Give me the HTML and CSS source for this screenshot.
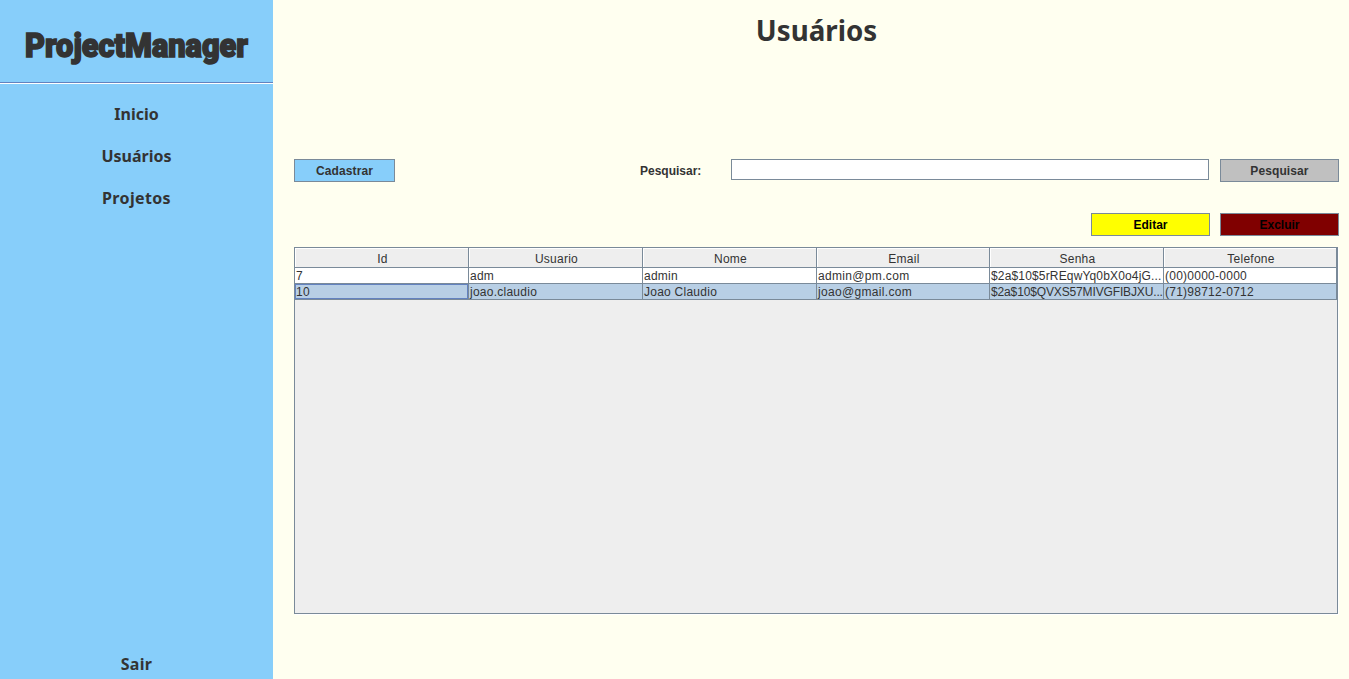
FILE: index.html
```html
<!DOCTYPE html>
<html lang="pt-BR">
<head>
<meta charset="utf-8">
<title>ProjectManager</title>
<link rel="stylesheet" href="styles.css">
</head>
<body>
<div class="app">
  <aside class="sidebar">
    <header class="brand">
      <svg class="logo" width="223" height="44" viewBox="0 0 223 44"><text x="0" y="33" textLength="223" lengthAdjust="spacingAndGlyphs">ProjectManager</text></svg>
    </header>
    <nav class="menu">
      <a>Inicio</a>
      <a>Usuários</a>
      <a class="wide">Projetos</a>
    </nav>
    <a class="exit">Sair</a>
  </aside>
  <main class="content">
    <h1 class="title">Usuários</h1>
    <div class="toolbar">
      <button class="btn create">Cadastrar</button>
      <label class="label" for="q">Pesquisar:</label>
      <input class="field" id="q" type="text">
      <button class="btn search">Pesquisar</button>
    </div>
    <div class="actions">
      <button class="btn edit">Editar</button>
      <button class="btn delete">Excluir</button>
    </div>
    <section class="table">
      <div class="row head"><span>Id</span><span>Usuario</span><span>Nome</span><span>Email</span><span>Senha</span><span>Telefone</span></div>
      <div class="row"><span>7</span><span>adm</span><span>admin</span><span class="email">admin@pm.com</span><span class="hash-a">$2a$10$5rREqwYq0bX0o4jG...</span><span>(00)0000-0000</span></div>
      <div class="row selected"><span class="focus">10</span><span>joao.claudio</span><span>Joao Claudio</span><span class="email">joao@gmail.com</span><span class="hash-b">$2a$10$QVXS57MIVGFIBJXU...</span><span>(71)98712-0712</span></div>
    </section>
  </main>
</div>
</body>
</html>
```
FILE: styles.css
```css
* { box-sizing: border-box; }
body { margin: 0; background: #fffff0; color: #333; font-family: "Liberation Sans", Arial, sans-serif; font-size: 12px; }
.app { display: flex; height: 679px; overflow: hidden; }
.sidebar { width: 273px; background: #87cefa; display: flex; flex-direction: column; align-items: center; font-family: "Noto Sans", sans-serif; font-weight: 700; font-size: 16px; }
.brand { width: 100%; height: 84px; padding: 24px 0 0 25px; border-bottom: 1px solid #fff; box-shadow: inset 0 -1px #6382bf; }
.logo { display: block; overflow: visible; }
.logo text { font: 900 33px Roboto, sans-serif; fill: #333; stroke: #333; stroke-width: 1.6px; stroke-linejoin: miter; }
.menu { display: flex; flex-direction: column; align-items: center; gap: 20px; padding-top: 19px; }
.menu a, .exit { line-height: 22px; }
.menu .wide { letter-spacing: .35px; }
.exit { margin-top: auto; margin-bottom: 4px; letter-spacing: .3px; }
.content { width: 1076px; padding: 0 10px 0 21px; }
.title { margin: 0; height: 159px; padding-top: 10px; text-align: center; font: 700 27.7px/40px "Noto Sans", sans-serif; }
.toolbar { display: flex; height: 23px; }
.btn { height: 23px; padding: 1px 0 0; border: 1px solid #7a8a99; border-radius: 0; font: bold 12px/20px "Liberation Sans", Arial, sans-serif; color: #333; }
.create { width: 101px; background: #87cefa; letter-spacing: .1px; }
.label { margin-left: 245px; width: 91px; font-weight: 700; line-height: 24px; }
.field { width: 478px; height: 21px; border: 1px solid #7a8a99; background: #fff; padding: 0 2px; outline: 0; }
.search { width: 119px; margin-left: 11px; background: #c0c0c0; letter-spacing: .1px; }
.actions { display: flex; justify-content: flex-end; gap: 10px; margin-top: 31px; }
.edit, .delete { width: 119px; color: #000; }
.edit { background: #ff0; }
.delete { background: #800000; }
.table { width: 1044px; height: 367px; margin-top: 11px; border: 1px solid #7a8a99; background: #eee; box-shadow: 1px 1px #fff; }
.row { display: grid; grid-template-columns: 174px 174px 174px 173px 174px 173px; width: 1042px; height: 16px; background: #fff; line-height: 16px; letter-spacing: .25px; }
.row span { border-right: 1px solid #7a8a99; border-bottom: 1px solid #7a8a99; padding-left: 1px; white-space: nowrap; overflow: hidden; }
.row .email { letter-spacing: .33px; }
.row .hash-a { letter-spacing: .16px; }
.row .hash-b { letter-spacing: -.14px; }
.row.head { height: 20px; background: #eee; line-height: 20px; text-align: center; }
.head span { padding: 1px 0 0 2px; box-shadow: inset 1px 1px #fff; }
.selected { background: #b8cfe5; }
.row .focus { box-shadow: inset 0 0 0 1px #6382bf; }
```
